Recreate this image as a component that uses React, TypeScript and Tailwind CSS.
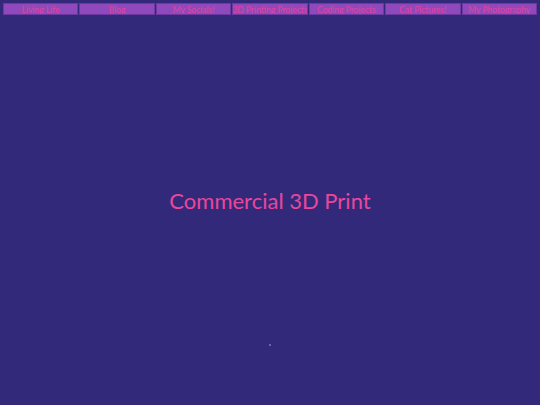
import React from "react";

const items = [
  "Living Life",
  "Blog",
  "My Socials!",
  "3D Printing Projects",
  "Coding Projects",
  "Cat Pictures!",
  "My Photography",
];

export default function App() {
  return (
    <div className="w-[540px] h-[405px] bg-[#33297a] flex flex-col" style={{ fontFamily: "Lato, Roboto, sans-serif" }}>
      <nav className="flex px-[3px] pt-[3px] gap-[1px]">
        {items.map((t) => (
          <div
            key={t}
            className="flex-1 h-[12px] bg-[#8f49bd] border border-[#6a3aa0] text-[#e0439a] text-[8.5px] leading-[10px] pt-[1px] flex items-center justify-center whitespace-nowrap overflow-hidden"
          >
            {t}
          </div>
        ))}
      </nav>
      <div className="flex-1 flex flex-col items-center">
        <div className="h-[172px]" />
        <h1 className="text-[#e8479b] text-[22px] leading-[28px]">
          Commercial 3D Print
        </h1>
        <div className="h-[129px]" />
        <div className="w-[2px] h-[2px] bg-[#6d64a8]" />
      </div>
    </div>
  );
}
